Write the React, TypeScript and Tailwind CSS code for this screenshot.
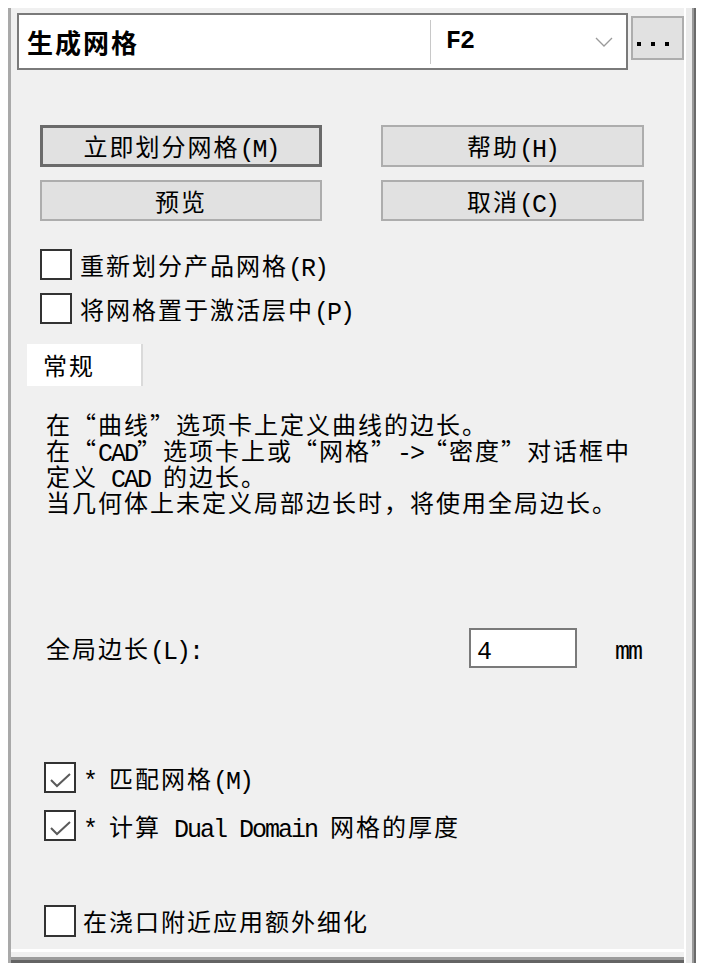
import clsx from "clsx";

// CJK glyphs get 26px advance, ASCII gets half of that, like the old bitmap font
function Txt({ s, bold }: { s: string; bold?: boolean }) {
  const runs = s.match(/[\x00-\x7f]+|[^\x00-\x7f]+/g) ?? [];
  return (
    <span className="whitespace-pre">
      {runs.map((r, i) =>
        r.charCodeAt(0) < 128 ? (
          <span
            key={i}
            className={clsx(
              "font-['Liberation_Mono',monospace] text-[25px] leading-[0px] tracking-[-2px] align-[-1px]",
              bold && "font-bold"
            )}
          >
            {r}
          </span>
        ) : (
          <span
            key={i}
            className={clsx(
              "font-['Noto_Sans_CJK_SC',sans-serif] text-[24px] leading-[26px] tracking-[2px]",
              bold && "font-bold"
            )}
          >
            {r}
          </span>
        )
      )}
    </span>
  );
}

function Btn({ label, primary, w, h }: { label: string; primary?: boolean; w: string; h: string }) {
  return (
    <div
      className={clsx(
        "flex items-center justify-center bg-[#e1e1e1] text-black",
        primary ? "border-[3px] border-[#6a6a6a]" : "border-2 border-[#adadad]",
        w,
        h
      )}
    >
      <div>
        <Txt s={label} />
      </div>
    </div>
  );
}

function Box({ checked, h = "h-[31px]" }: { checked?: boolean; h?: string }) {
  return (
    <div className={clsx("w-8 shrink-0 border-2 border-[#333333] bg-white flex items-center justify-center", h)}>
      {checked && (
        <svg width="28" height="27" viewBox="0 0 28 27">
          <path d="M5 16 L11 22 L24 10" fill="none" stroke="#5a5a5a" strokeWidth="2" />
        </svg>
      )}
    </div>
  );
}

export default function App() {
  return (
    <div className="w-[706px] h-[972px] bg-white pt-2 pl-2 flex items-start font-['Noto_Sans_CJK_SC',sans-serif] text-[24px] leading-[26px] text-black">
      <div className="w-[676px] flex flex-col border-l-[3px] border-[#a9a9a9]">
        <div className="h-[941px] bg-[#f0f0f0] flex flex-col">
          {/* command picker */}
          <div className="ml-[6px] mt-[5px] flex items-start">
            <div className="w-[611px] h-[57px] border-2 border-[#7a7a7a] bg-white flex items-center">
              <div className="w-[411px] pl-2 font-['Noto_Sans_CJK_SC',sans-serif] text-[26px] font-bold tracking-[2px]">
                生成网格
              </div>
              <div className="w-px h-[44px] bg-[#c8c8c8]" />
              <div className="pl-[15px] font-['Liberation_Mono',monospace] text-[25px] tracking-[-1px] font-bold">F2</div>
              <svg className="ml-auto mr-[13px]" width="18" height="10" viewBox="0 0 18 10">
                <path d="M1 1 L9 9 L17 1" fill="none" stroke="#9a9a9a" strokeWidth="1.3" />
              </svg>
            </div>
            <div className="ml-[3px] mt-[3px] w-[53px] h-[44px] bg-[#e1e1e1] border-2 border-[#adadad] flex items-end pb-[12px] pl-[4px] gap-[10px]">
              <div className="w-1 h-1 bg-black" />
              <div className="w-1 h-1 bg-black" />
              <div className="w-1 h-1 bg-black" />
            </div>
          </div>

          {/* action buttons */}
          <div className="ml-[29px] mt-[55px] flex gap-[59px]">
            <Btn label="立即划分网格(M)" primary w="w-[282px]" h="h-[42px]" />
            <Btn label="帮助(H)" w="w-[263px]" h="h-[42px]" />
          </div>
          <div className="ml-[29px] mt-[13px] flex gap-[59px]">
            <Btn label="预览" w="w-[282px]" h="h-[41px]" />
            <Btn label="取消(C)" w="w-[263px]" h="h-[41px]" />
          </div>

          <div className="ml-[29px] mt-[28px] flex items-center gap-2">
            <Box />
            <div>
              <Txt s="重新划分产品网格(R)" />
            </div>
          </div>
          <div className="ml-[29px] mt-[13px] flex items-center gap-2">
            <Box />
            <div>
              <Txt s="将网格置于激活层中(P)" />
            </div>
          </div>

          {/* tab */}
          <div className="ml-[16px] mt-[20px] w-[116px] h-[42px] bg-white border-r-2 border-[#dadada] flex items-center pl-[16px]">
            <div>
              <Txt s="常规" />
            </div>
          </div>

          <div className="ml-[35px] mt-[25px] flex flex-col">
            <div className="h-[26px]">
              <Txt s="在“曲线”选项卡上定义曲线的边长。" />
            </div>
            <div className="h-[26px]">
              <Txt s="在“CAD”选项卡上或“网格”->“密度”对话框中" />
            </div>
            <div className="h-[26px]">
              <Txt s="定义 CAD 的边长。" />
            </div>
            <div className="h-[26px]">
              <Txt s="当几何体上未定义局部边长时，将使用全局边长。" />
            </div>
          </div>

          <div className="ml-[35px] mt-[113px] flex items-center h-[40px]">
            <div className="w-[423px]">
              <Txt s="全局边长(L):" />
            </div>
            <div className="w-[108px] h-[40px] border-2 border-[#7a7a7a] bg-white flex items-center pl-[6px]">
              <div>
                <Txt s="4" />
              </div>
            </div>
            <div className="ml-[38px]">
              <Txt s="mm" />
            </div>
          </div>

          <div className="ml-[33px] mt-[94px] flex items-center gap-[7px]">
            <Box checked />
            <div>
              <Txt s="* 匹配网格(M)" />
            </div>
          </div>
          <div className="ml-[33px] mt-[17px] flex items-center gap-[7px]">
            <Box checked />
            <div>
              <Txt s="* 计算 Dual Domain 网格的厚度" />
            </div>
          </div>

          <div className="ml-[33px] mt-[64px] flex items-center gap-[7px]">
            <Box h="h-[32px]" />
            <div>
              <Txt s="在浇口附近应用额外细化" />
            </div>
          </div>
        </div>
        <div className="h-[3px] bg-white" />
        <div className="h-[5px] bg-[#f0f0f0]" />
        <div className="h-[3px] bg-[#9c9c9c]" />
        <div className="h-[3px] bg-[#646464]" />
      </div>
      <div className="w-[2px] h-[955px] bg-white" />
      <div className="w-[6px] h-[955px] bg-[#ebebeb]" />
      <div className="w-[2px] h-[955px] bg-[#9a9a9a]" />
      <div className="w-[2px] h-[955px] bg-[#6a6a6a]" />
    </div>
  );
}
